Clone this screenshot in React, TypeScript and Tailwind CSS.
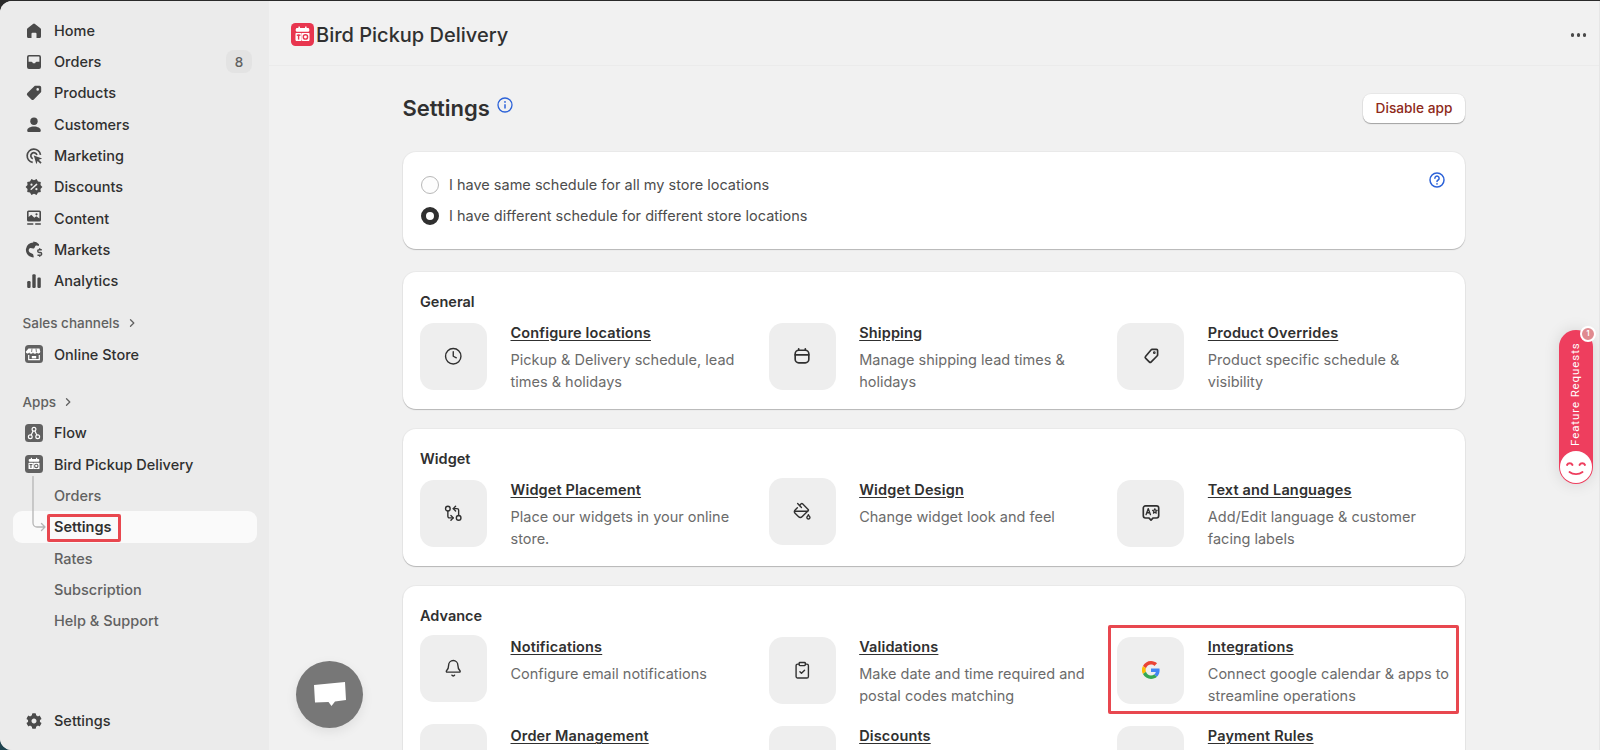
import React from "react";
import { Clock, Bell, ClipboardCheck, GitCompareArrows, PaintBucket } from "lucide-react";
import { FaCog } from "react-icons/fa";

const G = "#4a4a4a";
const Ico = ({ children }: { children: React.ReactNode }) => (
  <svg viewBox="0 0 20 20" className="w-5 h-5 shrink-0" fill={G} fillRule="evenodd">{children}</svg>
);

const star = (() => {
  const p: string[] = [];
  for (let i = 0; i < 20; i++) {
    const r = i % 2 ? 6.8 : 8.4;
    const a = (i * Math.PI) / 10;
    p.push(`${(10 + r * Math.cos(a)).toFixed(2)},${(10 + r * Math.sin(a)).toFixed(2)}`);
  }
  return p.join(" ");
})();

const HomeI = () => <Ico><path d="M11 2.900a1.600 1.600 0 0 0-2 0L3.600 7.200A1.700 1.700 0 0 0 3 8.500v7A1.500 1.500 0 0 0 4.500 17h3v-4.200a1 1 0 0 1 1-1h3a1 1 0 0 1 1 1V17h3a1.500 1.500 0 0 0 1.500-1.500v-7a1.700 1.700 0 0 0-.6-1.300z" /></Ico>;
const OrdersI = () => <Ico><path d="M5 3h10a2 2 0 0 1 2 2v10a2 2 0 0 1-2 2H5a2 2 0 0 1-2-2V5a2 2 0 0 1 2-2zM4.600 5v4.800h2.900c.4 0 .7.200.9.500l.5.900h2.200l.5-.9c.2-.3.5-.5.9-.5h2.900V5a.5.5 0 0 0-.5-.5H5.100a.5.5 0 0 0-.5.500z" /></Ico>;
const ProductsI = () => <Ico><path d="M11.600 2.800h4a1.600 1.600 0 0 1 1.600 1.600v4c0 .5-.2.900-.5 1.200l-6.900 6.900a1.700 1.700 0 0 1-2.400 0l-4-4a1.700 1.700 0 0 1 0-2.400l6.900-6.900c.3-.3.800-.4 1.300-.4zM13.700 7.700a1.300 1.300 0 1 0 0-2.600 1.300 1.300 0 0 0 0 2.600z" /></Ico>;
const CustomersI = () => <Ico><circle cx="10" cy="6.200" r="3.700" /><path d="M10 11.500c-3.600 0-6.800 1.600-6.800 4 0 1 .7 1.500 1.600 1.500h10.400c.9 0 1.600-.5 1.600-1.500 0-2.400-3.200-4-6.800-4z" /></Ico>;
const MarketingI = () => (
  <Ico>
    <g fill="none" stroke={G} strokeWidth="1.700">
      <path d="M8.700 16.400A6.700 6.700 0 1 1 16.500 8.800" />
      <path d="M8.800 12.700A3.100 3.100 0 1 1 12.900 9" />
    </g>
    <path d="M9.800 9.600l8.400 2.800-3.400 1.300 2.800 2.800-1.200 1.200-2.800-2.800-1.200 3.300z" />
  </Ico>
);
const DiscountsI = () => (
  <Ico>
    <polygon points={star} />
    <path d="M7.200 12.300 12.600 7.400" stroke="#ebebeb" strokeWidth="1.500" strokeLinecap="round" />
    <circle cx="7.500" cy="7.700" r="1.100" fill="#ebebeb" />
    <circle cx="12.400" cy="12.200" r="1.100" fill="#ebebeb" />
  </Ico>
);
const ContentI = () => (
  <Ico>
    <path d="M4.500 2.500h11A1.500 1.500 0 0 1 17 4v8a1.500 1.500 0 0 1-1.500 1.500h-11A1.500 1.500 0 0 1 3 12V4a1.500 1.500 0 0 1 1.500-1.500zM4.600 4v5l2.700-2.200 3 3 2-1.500 3.100 2.200V4z" />
    <circle cx="12.500" cy="6.300" r="1.100" />
    <rect x="3" y="15.300" width="6.500" height="1.500" rx=".7" />
    <rect x="11" y="15.300" width="6" height="1.500" rx=".7" />
  </Ico>
);
const MarketsI = () => (
  <Ico>
    <path d="M9.300 2.400a7.500 7.500 0 0 0-2 14.700c.6.200 2 .4 2.500.2-.3-1.200-.2-2.400-1-3.200-1-1-3-1-3.800-2.500-.6-1.200-.3-3 1-3.400 1.300-.4 2.500.8 3.800.3 1.200-.5.800-2 1.800-2.700.9-.6 2.200-.3 3 .2.300-.6.500-1.200.4-1.800a7.500 7.500 0 0 0-5.700-2.800z" />
    <path d="M17.800 9.700h-2.700a1.150 1.150 0 0 0 0 2.800h1.200a1.150 1.150 0 0 1 0 2.800h-2.800M15.700 8.200v1.500M15.700 15.300v1.500" fill="none" stroke={G} strokeWidth="1.400" />
  </Ico>
);
const AnalyticsI = () => <Ico><rect x="3.200" y="10" width="3.400" height="7" rx="1.200" /><rect x="8.300" y="3.200" width="3.400" height="13.800" rx="1.200" /><rect x="13.400" y="6.500" width="3.400" height="10.500" rx="1.200" /></Ico>;

const AppBox = ({ children, color = "#616161", cls = "w-[18px] h-[18px] mx-px" }: { children: React.ReactNode; color?: string; cls?: string }) => (
  <svg viewBox="0 0 18 18" className={`shrink-0 ${cls}`}>
    <rect width="18" height="18" rx="3.500" fill={color} />
    {children}
  </svg>
);
const Cal = ({ color, cls }: { color?: string; cls?: string }) => (
  <AppBox color={color} cls={cls}>
    <rect x="3.700" y="4" width="10.600" height="2.800" rx="1" fill="#fff" />
    <rect x="5.800" y="2.800" width="1.200" height="2" fill="#fff" />
    <rect x="11" y="2.800" width="1.200" height="2" fill="#fff" />
    <rect x="3.500" y="7.800" width="4.800" height="6.200" rx=".6" fill="#fff" />
    <rect x="8.300" y="7.800" width="6.200" height="6.200" rx=".6" fill="#fff" />
    <rect x="4.500" y="9" width="2.900" height="1.100" fill={color ?? "#616161"} />
    <rect x="5.400" y="9" width="1.100" height="4" fill={color ?? "#616161"} />
    <circle cx="11.300" cy="10.900" r="1.700" fill="none" stroke={color ?? "#616161"} strokeWidth="1.100" />
  </AppBox>
);
const StoreI = () => (
  <AppBox>
    <path d="M3.500 3.500h11l.8 3.200a1.900 1.900 0 0 1-3.500.9 2.100 2.100 0 0 1-3.800 0 2.100 2.100 0 0 1-3.800 0 1.900 1.900 0 0 1-3.500-.9z" fill="#fff" />
    <path d="M7 3.500 6.600 7M11 3.500l.4 3.500" stroke="#616161" strokeWidth=".8" />
    <path d="M3.700 10v4.600h10.600V10" fill="none" stroke="#fff" strokeWidth="1.200" />
    <rect x="6.800" y="11" width="4.400" height="2.400" fill="#fff" />
  </AppBox>
);
const FlowI = () => (
  <AppBox>
    <g fill="none" stroke="#fff" strokeWidth="1.200">
      <circle cx="9" cy="5.200" r="1.900" />
      <circle cx="5.300" cy="12.800" r="1.900" />
      <circle cx="12.700" cy="12.800" r="1.900" />
      <path d="M8.100 6.900 6.200 11M9.900 6.900l1.900 4.100" />
    </g>
  </AppBox>
);

const Row = ({ icon, label, sub, active, badge }: { icon?: React.ReactNode; label: string; sub?: boolean; active?: boolean; badge?: string }) => (
  <div className={`ml-[13px] mr-[12px] h-[31.3px] flex items-center pl-[10.5px] gap-[10.5px] rounded-[9px] text-[14.5px] font-medium ${active ? "bg-[#fafafa] text-[#303030] font-semibold" : sub ? "text-[#616161]" : "text-[#303030]"}`}>
    {icon ?? <span className="w-5 shrink-0" />}
    <span className="flex-1">{label}</span>
    {badge && <span className="mr-[5px] w-[26px] h-[23px] rounded-[8px] bg-[#e3e3e3] text-[#616161] text-[13.5px] flex items-center justify-center">{badge}</span>}
  </div>
);

const Head = ({ label, cls }: { label: string; cls: string }) => (
  <div className={`pl-[22.5px] h-[31.3px] flex items-center gap-[7px] text-[13.5px] font-medium text-[#616161] ${cls}`}>
    {label}
    <svg viewBox="0 0 10 10" className="w-[10px] h-[10px]" fill="none" stroke="#616161" strokeWidth="1.300" strokeLinecap="round" strokeLinejoin="round"><path d="M3.500 1.800 6.800 5 3.500 8.200" /></svg>
  </div>
);

const TileSvg = ({ children }: { children: React.ReactNode }) => (
  <svg viewBox="0 0 20 20" className="w-[22px] h-[22px]" fill="none" stroke="#303030" strokeWidth="1.500" strokeLinecap="round" strokeLinejoin="round">{children}</svg>
);
const lu = { size: 18.5, color: "#303030", strokeWidth: 1.800 };

const GoogleG = () => (
  <svg viewBox="0 0 48 48" className="w-[18px] h-[18px]">
    <path fill="#EA4335" d="M24 9.500c3.500 0 6.700 1.200 9.200 3.600l6.900-6.900C35.900 2.400 30.500 0 24 0 14.600 0 6.500 5.400 2.600 13.200l8 6.200C12.500 13.700 17.800 9.500 24 9.500z" />
    <path fill="#4285F4" d="M46.900 24.500c0-1.600-.1-3.100-.4-4.500H24v9h12.900c-.6 3-2.200 5.500-4.800 7.200l7.700 6c4.500-4.200 7.100-10.300 7.100-17.700z" />
    <path fill="#FBBC05" d="M10.500 28.600A14.500 14.500 0 0 1 10.500 19.400l-8-6.200a24 24 0 0 0 0 21.600z" />
    <path fill="#34A853" d="M24 48c6.500 0 11.900-2.100 15.900-5.800l-7.700-6c-2.200 1.500-5 2.300-8.200 2.300-6.200 0-11.500-4.200-13.400-9.900l-8 6.200C6.500 42.600 14.600 48 24 48z" />
  </svg>
);

type It = { t: string; d?: React.ReactNode; icon?: React.ReactNode; one?: boolean };

const Item = ({ t, d, icon, one }: It) => (
  <div className="flex items-start gap-[23.5px]">
    <div className={`w-[67px] h-[67px] rounded-[14px] bg-[#eeeeee] flex items-center justify-center shrink-0 ${one ? "mt-0" : "mt-[2px]"}`}>{icon}</div>
    <div className="pt-[2px] min-w-0 whitespace-nowrap">
      <div className="text-[14.5px] leading-[19px] font-semibold tracking-[0.15px] text-[#303030] underline underline-offset-[2px]">{t}</div>
      <div className="mt-[7px] text-[14.5px] leading-[22.4px] text-[#6b6b6b]">{d}</div>
    </div>
  </div>
);

const Card = ({ title, items, cls }: { title: string; items: It[]; cls?: string }) => (
  <div className={`bg-white rounded-[13px] shadow-[0_1px_1px_rgba(0,0,0,0.22),0_0_0_1px_rgba(0,0,0,0.03)] pl-[17.5px] pr-[16px] pt-[19.5px] shrink-0 ${cls ?? ""}`}>
    <div className="text-[14.5px] leading-[19px] font-semibold text-[#303030]">{title}</div>
    <div className="mt-[10px] grid grid-cols-3 gap-x-[17px] gap-y-[17px]">
      {items.map((it) => <Item key={it.t} {...it} />)}
    </div>
  </div>
);

export default function App() {
  return (
    <div className="relative w-[1600px] h-[750px] overflow-hidden bg-[linear-gradient(#2a2a2a_0%,#2a2a2a_40%,#1f4450_100%)] font-['Inter','Noto_Sans',sans-serif] pt-[1px]">
      <div className="flex h-full bg-[#f1f1f1] rounded-l-[12px] overflow-hidden border-r border-[#e6e6e6]">
        {/* Sidebar */}
        <aside className="w-[269px] shrink-0 bg-[#ebebeb] flex flex-col pt-[14px] pb-[13px] relative">
          <Row icon={<HomeI />} label="Home" />
          <Row icon={<OrdersI />} label="Orders" badge="8" />
          <Row icon={<ProductsI />} label="Products" />
          <Row icon={<CustomersI />} label="Customers" />
          <Row icon={<MarketingI />} label="Marketing" />
          <Row icon={<DiscountsI />} label="Discounts" />
          <Row icon={<ContentI />} label="Content" />
          <Row icon={<MarketsI />} label="Markets" />
          <Row icon={<AnalyticsI />} label="Analytics" />
          <Head label="Sales channels" cls="mt-[10.8px]" />
          <Row icon={<StoreI />} label="Online Store" />
          <Head label="Apps" cls="mt-[16.2px]" />
          <Row icon={<FlowI />} label="Flow" />
          <Row icon={<Cal />} label="Bird Pickup Delivery" />
          <Row sub label="Orders" />
          <Row active label="Settings" />
          <Row sub label="Rates" />
          <Row sub label="Subscription" />
          <Row sub label="Help & Support" />
          <div className="mt-auto">
            <Row icon={<span className="w-5 flex justify-center"><FaCog size={16} color={G} /></span>} label="Settings" />
          </div>
        </aside>

        {/* Main */}
        <main className="flex-1 min-w-0 flex flex-col">
          <header className="h-[64.5px] shrink-0 border-b border-[#ebebeb] flex items-center pt-[4px] pl-[22px] pr-[13px] gap-[2px]">
            <Cal color="#e8364f" cls="w-[23px] h-[23px]" />
            <span className="text-[20px] font-medium text-[#303030]">Bird Pickup Delivery</span>
            <span className="ml-auto flex gap-[2.5px]">
              <i className="w-[3.5px] h-[3.5px] rounded-full bg-[#4a4a4a]" />
              <i className="w-[3.5px] h-[3.5px] rounded-full bg-[#4a4a4a]" />
              <i className="w-[3.5px] h-[3.5px] rounded-full bg-[#4a4a4a]" />
            </span>
          </header>

          <div className="pl-[133.5px] pr-[134px] flex flex-col">
            <div className="flex items-center justify-between mt-[28px] h-[29px]">
              <div className="flex items-center gap-[7px]">
                <h1 className="text-[22px] font-semibold text-[#303030] leading-[29px]">Settings</h1>
                <svg viewBox="0 0 16 16" className="w-[16px] h-[16px] -mt-[6px]" fill="none" stroke="#2c62d8" strokeWidth="1.300">
                  <circle cx="8" cy="8" r="7" />
                  <path d="M8 7.200v4.300" strokeWidth="1.500" />
                  <circle cx="8" cy="4.900" r=".9" fill="#2c62d8" stroke="none" />
                </svg>
              </div>
              <button className="w-[102px] h-[29px] bg-white rounded-[8px] shadow-[0_1px_1px_rgba(0,0,0,0.3),0_0_0_1px_rgba(0,0,0,0.04)] text-[13.7px] font-medium text-[#8e2a1a]">Disable app</button>
            </div>

            <div className="relative mt-[29px] h-[97px] shrink-0 bg-white rounded-[13px] shadow-[0_1px_1px_rgba(0,0,0,0.22),0_0_0_1px_rgba(0,0,0,0.03)] pl-[18.5px] pt-[24px] flex flex-col gap-[13.5px] text-[14.5px] text-[#4d4d4d]">
              <label className="flex items-center gap-[10px] h-[18px]">
                <span className="w-[18px] h-[18px] rounded-full border border-[#b8b8b8] bg-[#fdfdfd]" />
                I have same schedule for all my store locations
              </label>
              <label className="flex items-center gap-[10px] h-[18px]">
                <span className="w-[18px] h-[18px] rounded-full border-[5px] border-[#303030] bg-white" />
                I have different schedule for different store locations
              </label>
              <svg viewBox="0 0 16 16" className="absolute right-[20.5px] top-[20.5px] w-[16px] h-[16px]" fill="none" stroke="#2c62d8" strokeWidth="1.500" strokeLinecap="round">
                <circle cx="8" cy="8" r="7" />
                <path d="M5.900 6.200a2.100 2.100 0 1 1 3.200 1.800c-.7.400-1.100.8-1.100 1.600" />
                <circle cx="8" cy="11.900" r=".8" fill="#2c62d8" stroke="none" />
              </svg>
            </div>

            <Card
              cls="mt-[23.5px] h-[137px]"
              title="General"
              items={[
                { t: "Configure locations", d: <>Pickup &amp; Delivery schedule, lead<br />times &amp; holidays</>, icon: <Clock {...lu} /> },
                { t: "Shipping", d: <>Manage shipping lead times &amp;<br />holidays</>, icon: <TileSvg><rect x="3.800" y="4.800" width="12.400" height="11.400" rx="3.200" /><path d="M3.800 9h12.400M7 4.800V3.500M13 4.800V3.500" /></TileSvg> },
                { t: "Product Overrides", d: <>Product specific schedule &amp;<br />visibility</>, icon: <TileSvg><path d="M11 4h4a1 1 0 0 1 1 1v4a1.500 1.500 0 0 1-.5 1l-5.500 5.500a1 1 0 0 1-1.400 0l-3.600-3.600a1 1 0 0 1 0-1.400L10 4.500A1.500 1.500 0 0 1 11 4z" /><circle cx="13" cy="7" r=".5" /></TileSvg> },
              ]}
            />
            <Card
              cls="mt-[20px] h-[137px]"
              title="Widget"
              items={[
                { t: "Widget Placement", d: <>Place our widgets in your online<br />store.</>, icon: <GitCompareArrows {...lu} /> },
                { t: "Widget Design", d: "Change widget look and feel", one: true, icon: <PaintBucket {...lu} /> },
                { t: "Text and Languages", d: <>Add/Edit language &amp; customer<br />facing labels</>, icon: <TileSvg><path d="M5 3.500h10a2 2 0 0 1 2 2v7a2 2 0 0 1-2 2h-3l-2 2-2-2H5a2 2 0 0 1-2-2v-7a2 2 0 0 1 2-2z" /><path d="M5.500 11.500 7.500 6l2 5.500M6.200 9.800h2.600" strokeWidth="1.200" /><path d="M13.500 6l.6 1.500 1.500.1-1.200 1 .4 1.600-1.300-.9-1.300.9.400-1.600-1.200-1 1.500-.1z" strokeWidth="1" /></TileSvg> },
              ]}
            />
            <Card
              cls="mt-[20px] h-[300px]"
              title="Advance"
              items={[
                { t: "Notifications", d: "Configure email notifications", one: true, icon: <Bell {...lu} /> },
                { t: "Validations", d: <>Make date and time required and<br />postal codes matching</>, icon: <ClipboardCheck {...lu} /> },
                { t: "Integrations", d: <>Connect google calendar &amp; apps to<br />streamline operations</>, icon: <GoogleG /> },
                { t: "Order Management", d: "", one: true },
                { t: "Discounts", d: "" },
                { t: "Payment Rules", d: "" },
              ]}
            />
          </div>
        </main>
      </div>

      {/* Sidebar sub-nav connector */}
      <svg className="absolute left-[30px] top-[476px] w-[18px] h-[56px]" viewBox="0 0 18 56" fill="none" stroke="#b5b5b5" strokeWidth="1.300" strokeLinecap="round" strokeLinejoin="round">
        <path d="M3 0.500V47a4 4 0 0 0 4 4h8M11.500 47.500 15 51l-3.500 3.500" />
      </svg>

      {/* Annotation boxes */}
      <div className="absolute left-[47px] top-[514px] w-[74px] h-[28px] border-[3px] border-[#e8474f] rounded-[2px]" />
      <div className="absolute left-[1108px] top-[625px] w-[351px] h-[89px] border-[3px] border-[#e8474f] rounded-[2px]" />

      {/* Chat bubble */}
      <div className="absolute left-[296px] top-[661px] w-[67px] h-[67px] rounded-full bg-[#777777] shadow-[0_4px_12px_rgba(0,0,0,0.08)] flex items-center justify-center">
        <svg viewBox="0 0 34 30" className="w-[34px] h-[30px]" fill="#fff"><path d="M1 5 32 2l1 18-11 1.500-3.500 4.500-3-4L2 22.500z" /></svg>
      </div>

      {/* Feature Requests */}
      <div className="absolute left-[1559px] top-[330px] w-[34px] h-[154px] rounded-full bg-[#ee3e5e] shadow-[0_0_16px_rgba(0,0,0,0.12)] flex flex-col items-center">
        <span className="mt-[12px] h-[104px] text-white text-[11.5px] tracking-[0.9px] [writing-mode:vertical-rl] rotate-180 text-center whitespace-nowrap font-['Roboto',sans-serif]">Feature Requests</span>
        <svg viewBox="0 0 32 32" className="absolute left-[1px] bottom-[1px] w-[32px] h-[32px]">
          <circle cx="16" cy="16" r="16" fill="#fff" />
          <g fill="none" stroke="#ee3e5e" strokeWidth="1.900" strokeLinecap="round">
            <path d="M7 14a3 3 0 0 1 5.500 0M19.500 14a3 3 0 0 1 5.500 0M9.500 21c3.500 2.800 9.500 2.800 13 0" />
          </g>
        </svg>
        <span className="absolute -top-[4px] right-[-3px] w-[16px] h-[16px] rounded-full bg-[#e08a8f] border-2 border-white text-white text-[7px] font-bold flex items-center justify-center">1</span>
      </div>
    </div>
  );
}
